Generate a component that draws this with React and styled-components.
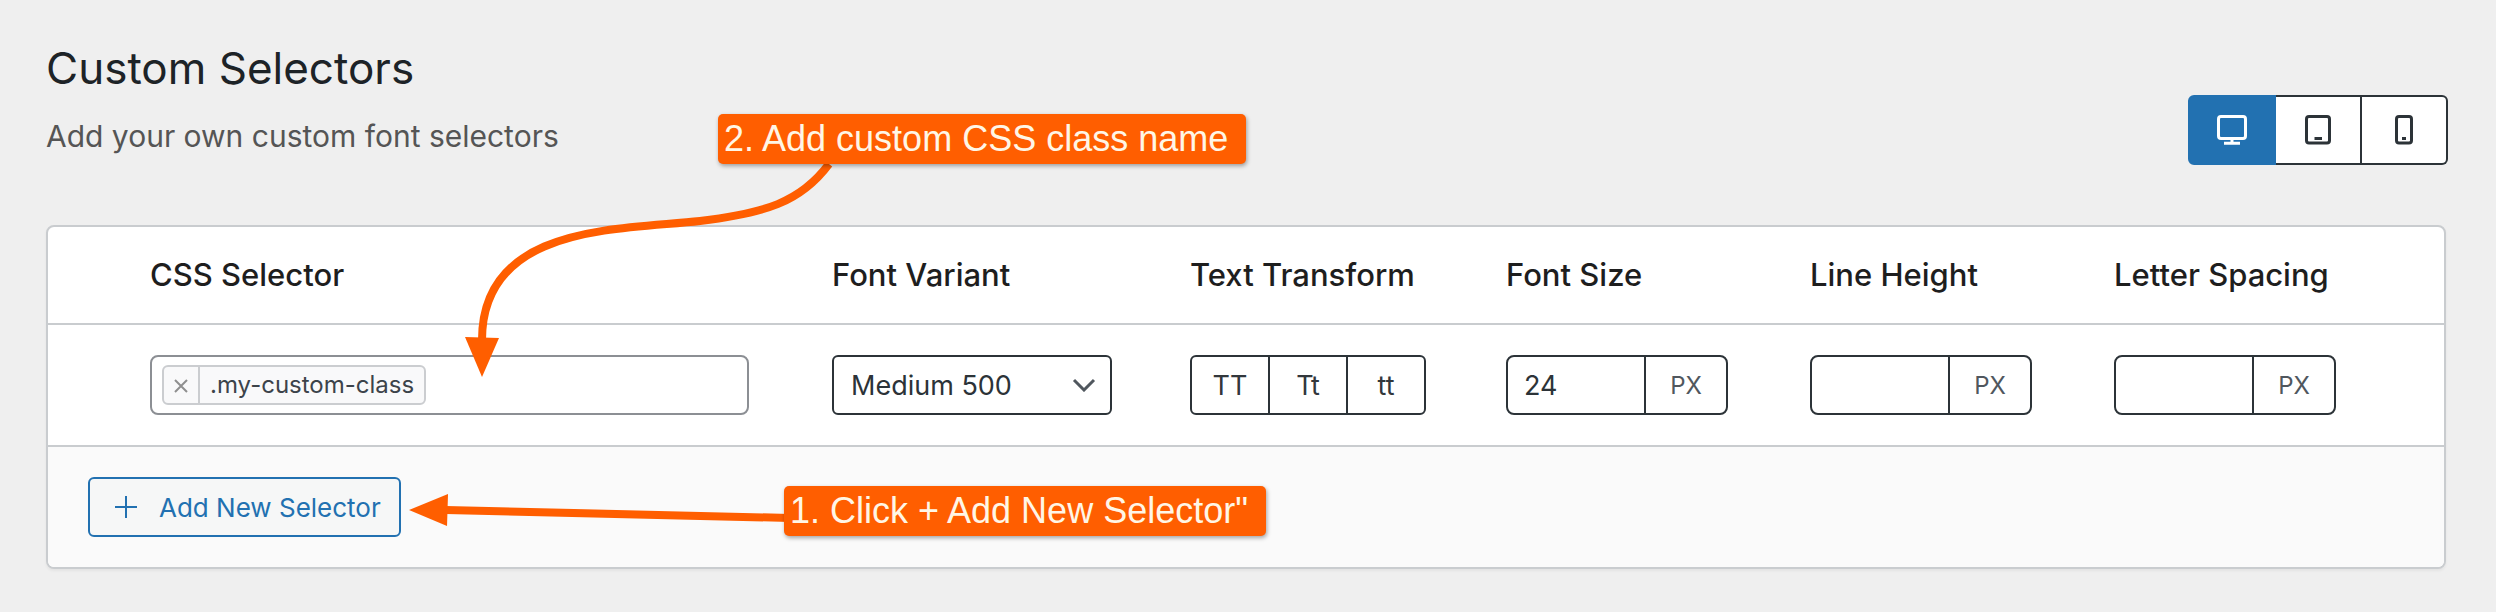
import React, { useState } from "react";
import styled, { createGlobalStyle } from "styled-components";

const columns = [
  { label: "CSS Selector" },
  { label: "Font Variant", width: 358 },
  { label: "Text Transform", width: 316 },
  { label: "Font Size", width: 304 },
  { label: "Line Height", width: 304 },
  { label: "Letter Spacing", width: 330 },
];

const DesktopIcon = () => (
  <Icon viewBox="0 0 30 30">
    <rect x="1.5" y="1.5" width="27" height="22" rx="2.5" />
    <path d="M15 24v4M7 28.3h16" />
  </Icon>
);

const TabletIcon = () => (
  <Icon viewBox="0 0 30 30">
    <rect x="3.5" y="1.5" width="23" height="26.5" rx="2.5" />
    <path d="M11.5 23.5h7.5" />
  </Icon>
);

const PhoneIcon = () => (
  <Icon viewBox="0 0 30 30">
    <rect x="7.5" y="1.5" width="15" height="26.5" rx="2.5" />
    <path d="M13 23.5h4" />
  </Icon>
);

const devices = [
  { name: "Desktop", icon: DesktopIcon },
  { name: "Tablet", icon: TabletIcon },
  { name: "Phone", icon: PhoneIcon },
];

const UnitField = ({ label, initial = "" }) => {
  const [value, setValue] = useState(initial);

  return (
    <Field>
      <FieldInput
        aria-label={label}
        value={value}
        onChange={(e) => setValue(e.target.value)}
      />
      <UnitButton type="button">PX</UnitButton>
    </Field>
  );
};

const App = () => {
  const [device, setDevice] = useState("Desktop");
  const [tags, setTags] = useState([".my-custom-class"]);

  return (
    <Page>
      <GlobalStyle />
      <Header>
        <div>
          <Title>Custom Selectors</Title>
          <Subtitle>Add your own custom font selectors</Subtitle>
        </div>
        <DeviceGroup>
          {devices.map(({ name, icon: DeviceIcon }) => (
            <DeviceButton
              key={name}
              type="button"
              aria-label={name}
              $active={device === name}
              onClick={() => setDevice(name)}
            >
              <DeviceIcon />
            </DeviceButton>
          ))}
        </DeviceGroup>
      </Header>

      <Panel>
        <Table>
          <thead>
            <tr>
              {columns.map((col) => (
                <HeadCell key={col.label} $width={col.width}>
                  {col.label}
                </HeadCell>
              ))}
            </tr>
          </thead>
          <tbody>
            <tr>
              <Cell>
                <TagBox>
                  {tags.map((tag) => (
                    <Tag key={tag}>
                      <TagRemove
                        type="button"
                        aria-label={`Remove ${tag}`}
                        onClick={() => setTags(tags.filter((t) => t !== tag))}
                      >
                        <CrossIcon viewBox="0 0 14 14">
                          <path d="M1 1l12 12M13 1L1 13" />
                        </CrossIcon>
                      </TagRemove>
                      <TagText>{tag}</TagText>
                    </Tag>
                  ))}
                  <TagInput aria-label="CSS Selector" />
                </TagBox>
              </Cell>
              <Cell>
                <SelectWrap>
                  <Select aria-label="Font Variant" defaultValue="500">
                    <option value="400">Regular 400</option>
                    <option value="500">Medium 500</option>
                    <option value="700">Bold 700</option>
                  </Select>
                  <Chevron viewBox="0 0 24 14">
                    <path d="M2 2l10 10L22 2" />
                  </Chevron>
                </SelectWrap>
              </Cell>
              <Cell>
                <CaseGroup>
                  <CaseButton type="button">TT</CaseButton>
                  <CaseButton type="button">Tt</CaseButton>
                  <CaseButton type="button">tt</CaseButton>
                </CaseGroup>
              </Cell>
              <Cell>
                <UnitField label="Font Size" initial="24" />
              </Cell>
              <Cell>
                <UnitField label="Line Height" />
              </Cell>
              <Cell>
                <UnitField label="Letter Spacing" />
              </Cell>
            </tr>
          </tbody>
        </Table>
        <Footer>
          <AddButton type="button">
            <PlusIcon viewBox="0 0 22 22">
              <path d="M11 0v22M0 11h22" />
            </PlusIcon>
            Add New Selector
          </AddButton>
        </Footer>
      </Panel>

      <Arrows width="900" height="560" viewBox="0 0 900 560">
        <path d="M829 164C800 203 764 213 700 221C620 230 482 224 482 340" />
        <path d="M446 510L790 518" />
        <polygon points="465,337 499,338 482,377" />
        <polygon points="409,510 448,494 447,526" />
      </Arrows>
      <Callout $top={114} $left={718}>
        2. Add custom CSS class name
      </Callout>
      <Callout $top={486} $left={784}>
        1. Click + Add New Selector"
      </Callout>
    </Page>
  );
};

const GlobalStyle = createGlobalStyle`
  * {
    box-sizing: border-box;
  }

  body {
    margin: 0;
    background-color: #efefef;
    font-family: Inter, "Liberation Sans", sans-serif;
  }

  button, input, select {
    font-family: inherit;
    margin: 0;
  }
`;

const Page = styled.main`
  position: relative;
  padding: 40px 48px 43px 46px;
`;

const Header = styled.header`
  display: flex;
  justify-content: space-between;
  align-items: flex-end;
  padding-bottom: 60px;
`;

const Title = styled.h1`
  margin: 0;
  font-size: 44px;
  line-height: 56px;
  font-weight: 400;
  color: #1d2327;
`;

const Subtitle = styled.p`
  margin: 20px 0 9px;
  font-size: 30px;
  line-height: 40px;
  color: #555555;
`;

const DeviceGroup = styled.div`
  display: flex;
  width: 260px;
  height: 70px;
`;

const DeviceButton = styled.button`
  flex: 1;
  display: flex;
  align-items: center;
  justify-content: center;
  padding: 0;
  border: 2px solid ${(props) => (props.$active ? "#2271b1" : "#2c3338")};
  background-color: ${(props) => (props.$active ? "#2271b1" : "white")};
  color: ${(props) => (props.$active ? "white" : "#2c3338")};

  & + & {
    border-left-width: 0;
  }

  &:first-child {
    border-radius: 6px 0 0 6px;
  }

  &:last-child {
    border-radius: 0 6px 6px 0;
  }
`;

const Icon = styled.svg`
  width: 30px;
  height: 30px;
  fill: none;
  stroke: currentColor;
  stroke-width: 3;
`;

const Panel = styled.section`
  margin-right: 2px;
  border: 2px solid #c9cccf;
  border-radius: 8px;
  background-color: white;
  box-shadow: 0 2px 3px rgba(0, 0, 0, 0.05);
  overflow: hidden;
`;

const Table = styled.table`
  width: 100%;
  table-layout: fixed;
  border-collapse: separate;
  border-spacing: 0;
`;

const HeadCell = styled.th`
  width: ${(props) => (props.$width ? `${props.$width}px` : "auto")};
  height: 98px;
  padding: 0;
  border-bottom: 2px solid #c9cccf;
  text-align: left;
  font-size: 31px;
  line-height: 40px;
  font-weight: 500;
  color: #1e1e1e;

  &:first-child {
    padding-left: 102px;
  }
`;

const Cell = styled.td`
  height: 122px;
  padding: 0;
  border-bottom: 2px solid #c9cccf;

  &:first-child {
    padding: 0 83px 0 102px;
  }
`;

const TagBox = styled.div`
  display: flex;
  align-items: center;
  height: 60px;
  padding: 0 10px;
  border: 2px solid #8c8f94;
  border-radius: 8px;
  background-color: white;
`;

const Tag = styled.span`
  display: flex;
  align-items: stretch;
  height: 40px;
  border: 2px solid #cbcdd0;
  border-radius: 6px;
  background-color: #f9f9fa;
`;

const TagRemove = styled.button`
  display: flex;
  align-items: center;
  justify-content: center;
  width: 36px;
  padding: 2px 0 0;
  border: 0;
  border-right: 2px solid #cbcdd0;
  background: none;
  color: #8f8f8f;
`;

const CrossIcon = styled.svg`
  width: 14px;
  height: 14px;
  fill: none;
  stroke: currentColor;
  stroke-width: 2;
`;

const TagText = styled.span`
  padding: 0 10px;
  font-size: 24px;
  line-height: 36px;
  color: #3c434a;
`;

const TagInput = styled.input`
  flex: 1;
  min-width: 0;
  border: 0;
  outline: none;
  background: none;
  font-size: 24px;
`;

const SelectWrap = styled.div`
  display: grid;
  align-items: center;
  width: 280px;
`;

const Select = styled.select`
  grid-area: 1 / 1;
  height: 60px;
  padding: 0 48px 0 17px;
  border: 2px solid #2c3338;
  border-radius: 6px;
  appearance: none;
  background-color: white;
  font-size: 27px;
  color: #2c3338;
`;

const Chevron = styled.svg`
  grid-area: 1 / 1;
  justify-self: end;
  width: 24px;
  height: 14px;
  margin-right: 16px;
  fill: none;
  stroke: #50575e;
  stroke-width: 3;
  pointer-events: none;
`;

const CaseGroup = styled.div`
  display: flex;
  width: 236px;
  height: 60px;
  border: 2px solid #2c3338;
  border-radius: 6px;
`;

const CaseButton = styled.button`
  flex: 1;
  padding: 0;
  border: 0;
  background: none;
  font-size: 27px;
  color: #32373c;

  & + & {
    border-left: 2px solid #2c3338;
  }
`;

const Field = styled.div`
  display: flex;
  width: 222px;
  height: 60px;
  border: 2px solid #2c3338;
  border-radius: 8px;
`;

const FieldInput = styled.input`
  flex: 1;
  min-width: 0;
  padding: 0 16px;
  border: 0;
  outline: none;
  background: none;
  font-size: 27px;
  color: #2c3338;
`;

const UnitButton = styled.button`
  width: 82px;
  padding: 0;
  border: 0;
  border-left: 2px solid #2c3338;
  background: none;
  font-size: 24px;
  color: #50575e;
`;

const Footer = styled.footer`
  display: flex;
  align-items: center;
  height: 120px;
  padding: 0 40px;
  background-color: #fafafa;
`;

const AddButton = styled.button`
  display: flex;
  align-items: center;
  gap: 22px;
  height: 60px;
  padding: 0 18px 0 25px;
  border: 2px solid #2271b1;
  border-radius: 6px;
  background-color: #f6f7f7;
  font-size: 26px;
  color: #2271b1;
`;

const PlusIcon = styled.svg`
  width: 22px;
  height: 22px;
  fill: none;
  stroke: currentColor;
  stroke-width: 2;
`;

/* Tutorial notes that float over the settings page */
const Arrows = styled.svg`
  position: absolute;
  top: 0;
  left: 0;
  fill: none;
  stroke: #ff5e00;
  stroke-width: 8;
  pointer-events: none;

  polygon {
    fill: #ff5e00;
    stroke: none;
  }
`;

const Callout = styled.div`
  position: absolute;
  top: ${(props) => props.$top}px;
  left: ${(props) => props.$left}px;
  padding: 0 18px 0 6px;
  border-radius: 5px;
  background-color: #ff5e00;
  box-shadow: 1px 2px 4px rgba(0, 0, 0, 0.35);
  font-family: "Liberation Sans", Arial, sans-serif;
  font-size: 36px;
  line-height: 50px;
  color: #fff6e6;
  white-space: nowrap;
`;

export default App;
